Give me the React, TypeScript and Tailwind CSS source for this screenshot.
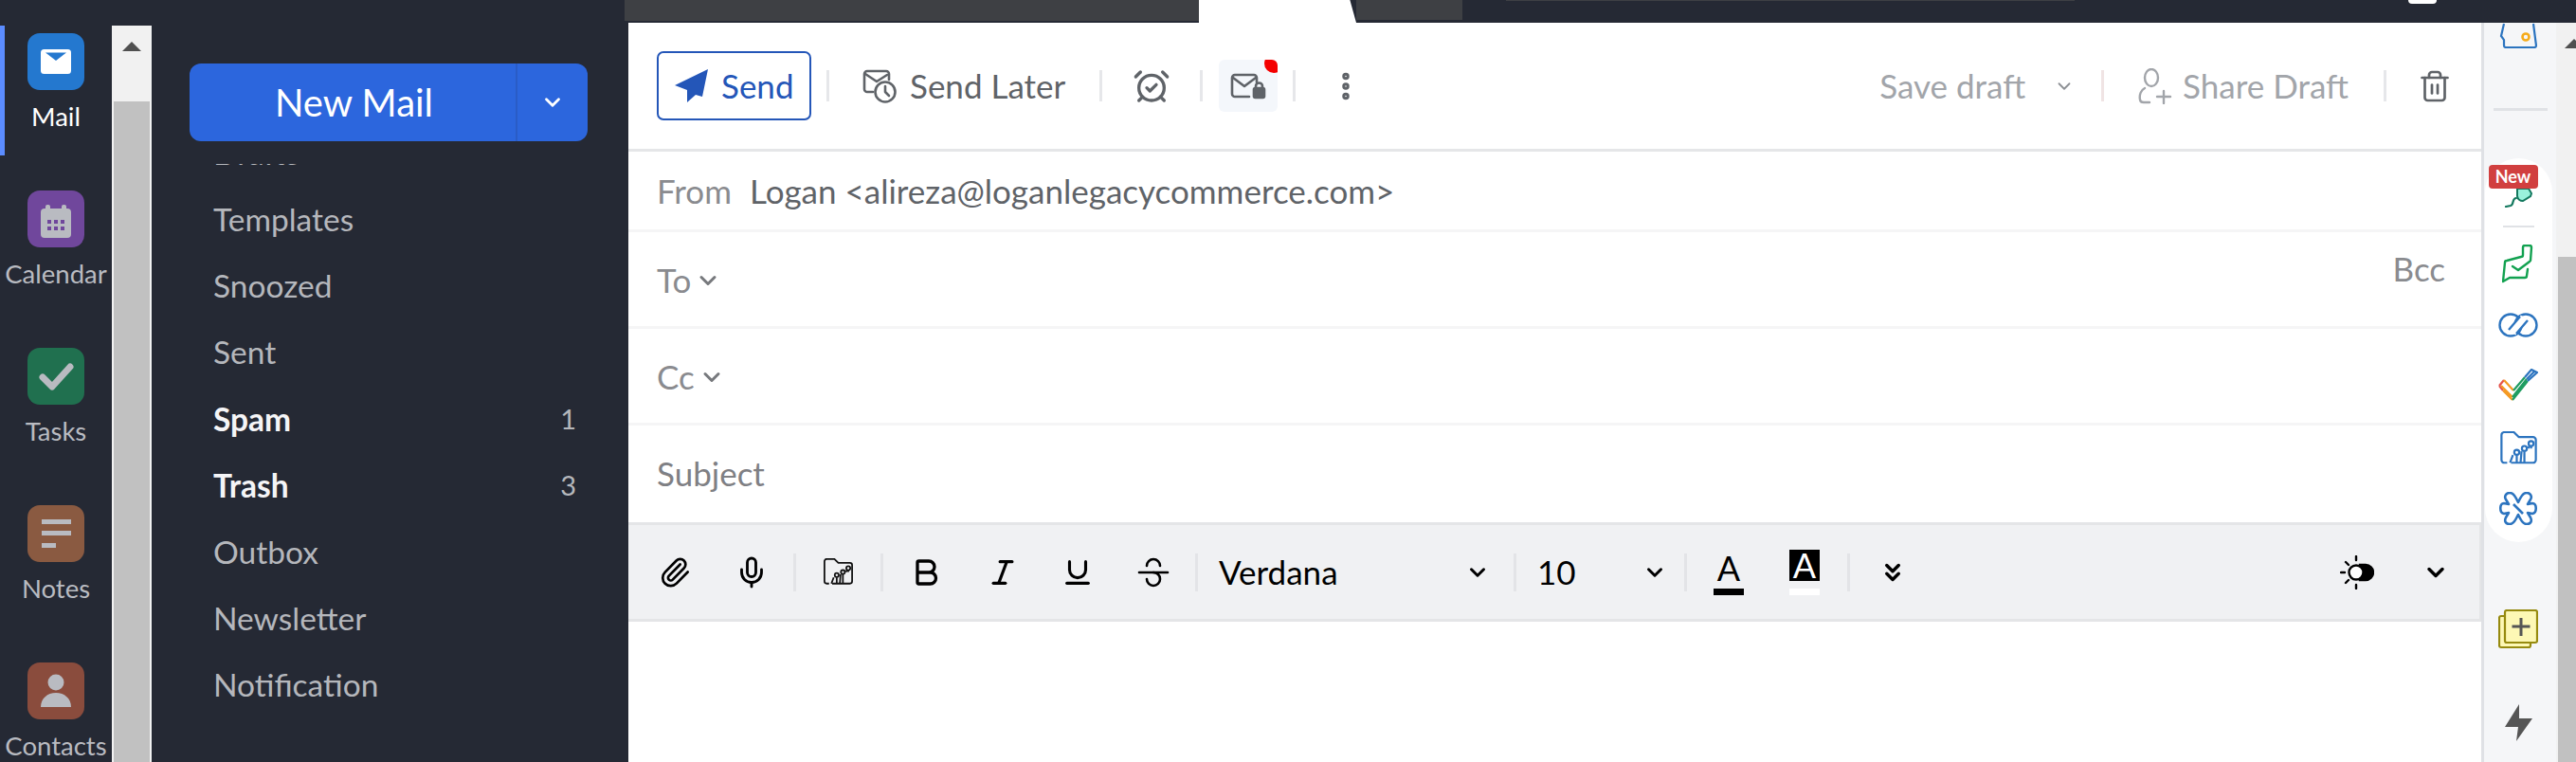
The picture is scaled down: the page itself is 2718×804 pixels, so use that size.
import {
  AlarmClockCheck,
  Bold,
  ChevronDown,
  ChevronsDown,
  EllipsisVertical,
  Italic,
  Mic,
  Paperclip,
  Trash2,
  Underline,
} from "lucide-react";

const Sep = ({ className = "" }: { className?: string }) => (
  <div className={`w-[3px] h-[33px] shrink-0 bg-[#e6e7ea] ${className}`}></div>
);

const ToolSep = ({ className = "" }: { className?: string }) => (
  <div className={`w-[3px] h-[40px] shrink-0 bg-[#e3e4e7] ${className}`}></div>
);

const FolderChart = ({ color, size }: { color: string; size: number }) => (
  <svg width={size} height={size * 0.86} viewBox="0 0 40 35" fill="none" stroke={color} strokeWidth="2.2" strokeLinejoin="round">
    <path d="M8 33H5a3 3 0 0 1-3-3V4a3 3 0 0 1 3-3h10l5 5h15a3 3 0 0 1 3 3v21a3 3 0 0 1-3 3H12" />
    <circle cx="18" cy="22" r="2.6" />
    <circle cx="26" cy="18" r="2.6" />
    <circle cx="33" cy="13" r="2.6" />
    <path d="M11 33l3-8M18 25v8M23 21l-1 12M26 21v12M31 16l-1 2M33 16v2" />
  </svg>
);

const apps = [
  {
    label: "Mail",
    bg: "bg-[#2478cf]",
    active: true,
    icon: (
      <svg width="60" height="60" viewBox="0 0 60 60">
        <rect x="14" y="17" width="32" height="26" rx="3.5" fill="#fff" />
        <path d="M19 20.500h22l-11 8.500z" fill="#2478cf" />
      </svg>
    ),
  },
  {
    label: "Calendar",
    bg: "bg-[#70479c]",
    icon: (
      <svg width="60" height="60" viewBox="0 0 60 60">
        <rect x="14" y="19" width="32" height="31" rx="4" fill="#b9bbc1" />
        <rect x="19" y="15" width="5" height="9" rx="2" fill="#b9bbc1" />
        <rect x="36" y="15" width="5" height="9" rx="2" fill="#b9bbc1" />
        <path d="M21 31h4v4h-4zM28 31h4v4h-4zM35 31h4v4h-4zM21 38h4v4h-4zM28 38h4v4h-4zM35 38h4v4h-4z" fill="#70479c" />
      </svg>
    ),
  },
  {
    label: "Tasks",
    bg: "bg-[#20704f]",
    icon: (
      <svg width="60" height="60" viewBox="0 0 60 60" fill="none">
        <path d="M16 31l10 10 19-21" stroke="#b9bbc1" strokeWidth="7" strokeLinecap="round" strokeLinejoin="round" />
      </svg>
    ),
  },
  {
    label: "Notes",
    bg: "bg-[#8a5a41]",
    icon: (
      <svg width="60" height="60" viewBox="0 0 60 60">
        <path d="M15 15h31v5H15zM15 27h31v5H15zM15 40h15v5H15z" fill="#b9bbc1" />
      </svg>
    ),
  },
  {
    label: "Contacts",
    bg: "bg-[#8a4c3d]",
    icon: (
      <svg width="60" height="60" viewBox="0 0 60 60">
        <circle cx="30" cy="21" r="8.5" fill="#b9bbc1" />
        <path d="M14 47c0-9 7-15 16-15s16 6 16 15z" fill="#b9bbc1" />
      </svg>
    ),
  },
];

const folders = [
  { name: "Drafts" },
  { name: "Templates" },
  { name: "Snoozed" },
  { name: "Sent" },
  { name: "Spam", count: 1 },
  { name: "Trash", count: 3 },
  { name: "Outbox" },
  { name: "Newsletter" },
  { name: "Notification" },
];

const App = () => {
  return (
    <div className="w-[2718px] h-[804px] overflow-hidden flex flex-col bg-[#252934] font-[Lato,sans-serif] whitespace-nowrap">
      {/* browser tabs peeking in at the top */}
      <div className="h-[24px] shrink-0 flex items-start">
        <div className="w-[659px] shrink-0"></div>
        <div className="w-[606px] h-[22px] shrink-0 bg-[#3e4044]"></div>
        <div className="w-[166px] h-[24px] shrink-0 bg-white [clip-path:polygon(0_0,96%_0,100%_100%,0_100%)]"></div>
        <div className="w-[112px] h-[21px] shrink-0 bg-[#3e4044]"></div>
        <div className="w-[46px] shrink-0"></div>
        <div className="w-[600px] h-[1px] shrink-0 bg-[#3e4044]"></div>
        <div className="w-[352px] shrink-0"></div>
        <div className="w-[30px] h-[4px] shrink-0 bg-white rounded-b-[14px]"></div>
      </div>

      <div className="flex flex-1 min-h-0">
        {/* app switcher */}
        <div className="w-[118px] shrink-0 pt-[3px] flex flex-col gap-[29px] overflow-hidden">
          {apps.map((app) => (
            <div
              key={app.label}
              className={`h-[137px] shrink-0 pt-[8px] flex flex-col items-center ${
                app.active ? "border-l-[5px] border-[#5b8cff] pr-[5px]" : ""
              }`}>
              <div className={`w-[60px] h-[60px] shrink-0 rounded-[13px] ${app.bg}`}>{app.icon}</div>
              <span
                className={`mt-[10px] text-[27.500px] leading-[36px] ${
                  app.active ? "text-white" : "text-[#b9bbc1]"
                }`}>
                {app.label}
              </span>
            </div>
          ))}
        </div>

        {/* app switcher scrollbar */}
        <div className="w-[42px] shrink-0 mt-[3px] bg-[#f1f1f1] flex flex-col">
          <div className="h-[80px] shrink-0 pt-[17px] flex justify-center">
            <div className="w-0 h-0 border-x-[10px] border-x-transparent border-b-[10px] border-b-[#505050]"></div>
          </div>
          <div className="flex-1 mx-[2px] bg-[#c1c1c1]"></div>
        </div>

        {/* folders */}
        <div className="w-[503px] shrink-0 flex flex-col">
          <div className="ml-[40px] mt-[43px] w-[420px] h-[82px] shrink-0 flex rounded-[12px] bg-[#2c66dd] text-white">
            <div className="w-[346px] pl-[3px] flex items-center justify-center text-[40px] border-r-[2px] border-[#2a5cc6]">
              New Mail
            </div>
            <div className="flex-1 flex items-center justify-center">
              <ChevronDown size={26} strokeWidth={2.6} />
            </div>
          </div>
          <div className="mt-[24px] flex-1 min-h-0 overflow-hidden pl-[65px] pr-[55px]">
            <div className="-mt-[47px]">
              {folders.map((f) => (
                <div key={f.name} className="h-[70.15px] flex items-center justify-between text-[33.500px]">
                  <span className={f.count ? "font-bold text-[#f5f5f7]" : "text-[#b5b7bc]"}>{f.name}</span>
                  {f.count && <span className="text-[29px] text-[#b5b7bc]">{f.count}</span>}
                </div>
              ))}
            </div>
          </div>
        </div>

        {/* compose */}
        <div className="w-[1955px] shrink-0 bg-white flex flex-col text-[#5f6368]">
          <div className="h-[136px] shrink-0 flex items-center pl-[30px] pr-[31px] border-b-[3px] border-[#e5e6e8] text-[35px]">
            <div className="w-[163px] h-[73px] shrink-0 rounded-[7px] border-[2px] border-[#2456b8] flex items-center pl-[17px] text-[#2456b8]">
              <svg className="shrink-0" width="36" height="36" viewBox="0 0 36 36">
                <path d="M35 0L0 17l13 5v13l9-8 7 2z" fill="#2456b8" />
              </svg>
              <span className="ml-[13px]">Send</span>
            </div>
            <Sep className="ml-[16px]" />
            <svg className="ml-[35px] shrink-0" width="36" height="36" viewBox="0 0 36 36" fill="none" stroke="#5f6368" strokeWidth="2.6" strokeLinecap="round" strokeLinejoin="round">
              <path d="M11 24H5a3 3 0 0 1-3-3V5a3 3 0 0 1 3-3h20a3 3 0 0 1 3 3v6" />
              <path d="M3 5l12 8 11-7" />
              <circle cx="24" cy="24" r="10.5" />
              <path d="M24 18v6l4 4" />
            </svg>
            <span className="ml-[14px] w-[165px] shrink-0">Send Later</span>
            <Sep className="ml-[35px]" />
            <AlarmClockCheck className="ml-[32px] shrink-0" size={40} strokeWidth={2} />
            <Sep className="ml-[31px]" />
            <div className="relative ml-[17px] w-[62px] h-[55px] shrink-0 rounded-[6px] bg-[#f4f7fb] flex items-center justify-center overflow-hidden">
              <svg width="38" height="28" viewBox="0 0 38 28" fill="none" stroke="#5f6368" strokeWidth="2.6" strokeLinecap="round" strokeLinejoin="round">
                <path d="M20 25H5a3 3 0 0 1-3-3V5a3 3 0 0 1 3-3h20a3 3 0 0 1 3 3v5" />
                <path d="M3 5l12 9 12-9" />
                <rect x="25" y="16" width="11" height="10" rx="1.5" fill="#5f6368" />
                <path d="M27 16v-2a3.5 3.5 0 0 1 7 0v2" />
              </svg>
              <div className="absolute -top-[6px] -right-[6px] w-[20px] h-[20px] rounded-full bg-[#f40000]"></div>
            </div>
            <Sep className="ml-[16px]" />
            <EllipsisVertical className="ml-[35px] shrink-0" size={36} strokeWidth={3} />

            <div className="ml-auto flex items-center text-[#a2a5aa]">
              <span>Save draft</span>
              <ChevronDown className="ml-[30px] text-[#8d9095]" size={22} strokeWidth={2} />
              <Sep className="ml-[28px] bg-[#f0e4e4]" />
              <svg className="ml-[36px]" width="36" height="38" viewBox="0 0 36 38" fill="none" stroke="#a2a5aa" strokeWidth="2.4" strokeLinecap="round">
                <ellipse cx="14" cy="10" rx="7" ry="9" />
                <path d="M7 21c-4 2-6 7-5 12 0 2 2 3 4 3h6" />
                <path d="M27 24v13M20 30h14" />
              </svg>
              <span className="ml-[11px]">Share Draft</span>
              <Sep className="ml-[37px]" />
              <Trash2 className="ml-[33px] text-[#5f6368]" size={36} strokeWidth={1.8} />
            </div>
          </div>

          <div className="h-[85px] shrink-0 flex items-center pl-[30px] border-b-[3px] border-[#f5f5f6] text-[35px]">
            <span className="text-[#8a8b8f]">From</span>
            <span className="ml-[19px]">Logan &lt;alireza@loganlegacycommerce.com&gt;</span>
          </div>
          <div className="h-[102px] shrink-0 flex items-center pt-[2px] pl-[30px] pr-[38px] border-b-[3px] border-[#f5f5f6] text-[35px] text-[#8a8b8f]">
            <span>To</span>
            <ChevronDown className="ml-[4px] text-[#77797d]" size={28} strokeWidth={2.6} />
            <span className="ml-auto -mt-[24px]">Bcc</span>
          </div>
          <div className="h-[102px] shrink-0 flex items-center pt-[2px] pl-[30px] border-b-[3px] border-[#f5f5f6] text-[35px] text-[#8a8b8f]">
            <span>Cc</span>
            <ChevronDown className="ml-[4px] text-[#77797d]" size={28} strokeWidth={2.6} />
          </div>
          <div className="h-[102px] shrink-0 flex items-center pb-[2px] pl-[30px] text-[35px] text-[#7f8084]">Subject</div>

          {/* formatting bar */}
          <div className="h-[105px] shrink-0 flex items-center pl-[32px] pr-[32px] bg-[#f0f1f3] border-y-[3px] border-[#e4e5e7] border-r-[2px] text-black">
            <Paperclip size={34} strokeWidth={1.9} className="shrink-0" />
            <Mic size={36} strokeWidth={1.9} className="ml-[46px] shrink-0" />
            <ToolSep className="ml-[26px]" />
            <div className="ml-[28px]">
              <FolderChart color="#111" size={33} />
            </div>
            <ToolSep className="ml-[28px]" />
            <Bold size={36} strokeWidth={2.2} className="ml-[27px] shrink-0" />
            <Italic size={34} strokeWidth={2.2} className="ml-[46px] shrink-0" />
            <Underline size={34} strokeWidth={2.2} className="ml-[45px] shrink-0" />
            <svg className="ml-[45px] shrink-0" width="36" height="36" viewBox="0 0 36 36" fill="none" stroke="#000" strokeWidth="2.6" strokeLinecap="round">
              <path d="M3 18h30" />
              <path d="M11 11a7 7 0 0 1 14 0" />
              <path d="M18 18c4 0 7 3 7 7a7 7 0 0 1-14 0" />
            </svg>
            <ToolSep className="ml-[26px]" />
            <span className="ml-[22px] w-[260px] shrink-0 text-[35px]">Verdana</span>
            <ChevronDown size={26} strokeWidth={2.8} className="shrink-0" />
            <ToolSep className="ml-[25px]" />
            <span className="ml-[22px] w-[111px] shrink-0 text-[35px]">10</span>
            <ChevronDown size={26} strokeWidth={2.8} className="shrink-0" />
            <ToolSep className="ml-[18px]" />
            <div className="ml-[27px] w-[34px] shrink-0 flex flex-col items-center">
              <span className="text-[36px] leading-[38px]">A</span>
              <div className="mt-[3px] w-[32px] h-[7px] bg-black"></div>
            </div>
            <div className="ml-[47px] w-[32px] shrink-0 flex flex-col items-center">
              <span className="w-[32px] h-[33px] bg-black text-white text-[36px] leading-[33px] text-center">A</span>
              <div className="mt-[8px] w-[32px] h-[7px] bg-white"></div>
            </div>
            <ToolSep className="ml-[29px]" />
            <ChevronsDown size={30} strokeWidth={2.8} className="ml-[30px] shrink-0" />
            <div className="ml-auto flex items-center">
              <svg width="36" height="36" viewBox="0 0 36 36" fill="none" stroke="#000" strokeWidth="2.4" strokeLinecap="round">
                <path d="M17 1v4M17 31v4M1 18h4M6 7l3 3M6 29l3-3" />
                <path d="M21 10h6a8 8 0 0 1 0 16h-6z" fill="#000" />
                <circle cx="17" cy="18" r="7.5" fill="#fff" />
              </svg>
              <ChevronDown size={28} strokeWidth={3} className="ml-[51px]" />
            </div>
          </div>
          <div className="flex-1"></div>
        </div>

        {/* integrations rail */}
        <div className="w-[79px] shrink-0 border-l-[3px] border-[#dfe1e5] bg-[#f5f6f8] flex flex-col items-center overflow-hidden">
          <svg className="shrink-0 mr-[4px]" width="42" height="27" viewBox="0 0 42 27" fill="none" strokeWidth="2.2">
            <path d="M6 1L3 14l3 4v6a2 2 0 0 0 2 2h30a2 2 0 0 0 2-2L37 1" stroke="#2c74bf" />
            <circle cx="29" cy="15" r="3.5" stroke="#f5ab1b" strokeWidth="2.6" />
          </svg>
          <div className="mt-[63px] w-[57px] h-[3px] shrink-0 bg-[#e0e2e6]"></div>
          <div className="mt-[50px] mr-[4px] w-[71px] h-[405px] shrink-0 rounded-[36px] bg-white flex flex-col items-center">
            <div className="relative mt-[26px] h-[26px] w-full">
              <div className="absolute left-[4px] top-[-19px] h-[25px] w-[52px] rounded-[4px] bg-[#d13f3f] text-white text-[18px] font-bold leading-[25px] text-center">
                New
              </div>
              <svg className="absolute left-[18px] top-[6px]" width="34" height="20" viewBox="0 0 34 20" fill="none">
                <path d="M16 0v8a6 6 0 0 0 6 5l8-5 1-3-3-5z" fill="#9af2dc" stroke="#14795f" strokeWidth="2" />
                <path d="M15 10c-5 0-2 7-6 8l-5 1" stroke="#14795f" strokeWidth="2.2" strokeLinecap="round" />
              </svg>
            </div>
            <div className="mt-[19px] w-[33px] h-[2px] bg-[#e0e2e6]"></div>
            <svg className="mt-[18px]" width="34" height="41" viewBox="0 0 34 41" fill="none" stroke="#12a150" strokeWidth="2.4" strokeLinejoin="round" strokeLinecap="round">
              <path d="M27 26l-1 7a2 2 0 0 1-2 2H8l-7 4L3 19a2 2 0 0 1 2-2l15-4a2 2 0 0 0 2-2V3a2 2 0 0 1 2-2h5a2 2 0 0 1 2 2l-1 14" />
              <path d="M11 23l6 4 12-9" />
            </svg>
            <svg className="mt-[30px]" width="42" height="28" viewBox="0 0 42 28" fill="none" strokeWidth="2.4">
              <circle cx="13" cy="14" r="11.500" stroke="#2c74bf" />
              <circle cx="29" cy="14" r="11.500" stroke="#2c74bf" />
              <path d="M15 22L27 6" stroke="#fff" strokeWidth="8" />
              <path d="M11 19L23 5M19 23L31 9" stroke="#2c74bf" />
            </svg>
            <svg className="mt-[32px]" width="42" height="34" viewBox="0 0 42 34" fill="none" strokeWidth="2.200" strokeLinejoin="round">
              <path d="M1 18L6 12M1 18l4 5" stroke="#e5534b" />
              <path d="M5 23l10 10M6 12l10 11M3 18l12 12" stroke="#f59a23" />
              <path d="M15 33L31 13M16 23L28 9M15 30L30 11" stroke="#1f9d61" />
              <path d="M31 13l10-9-6-3-7 8M30 11l8-8" stroke="#2c74bf" />
            </svg>
            <div className="mt-[32px]">
              <FolderChart color="#2c74bf" size={41} />
            </div>
            <svg className="mt-[29px]" width="42" height="35" viewBox="0 0 42 35" fill="none" stroke="#2c74bf" strokeWidth="2.6" strokeLinejoin="round">
              <path d="M21 11C18 5 16 1 12 1 8 1 6 5 8 8l3 5-5-1c-5 0-5 10 0 11l5-1-3 5c-2 4 0 7 4 7s6-4 9-10c3 6 5 10 9 10s6-3 4-7l-3-5 5 1c5-1 5-11 0-11l-5 1 3-5c2-3 0-7-4-7s-6 4-9 10z" />
              <path d="M16 13l10 10" />
            </svg>
          </div>
          <svg className="mt-[71px] mr-[4px] shrink-0" width="42" height="42" viewBox="0 0 42 42" fill="none" stroke="#968a0f" strokeWidth="2.2" strokeLinejoin="round">
            <rect x="1" y="7" width="33" height="33" rx="2" fill="#fdf8b5" />
            <rect x="7" y="1" width="34" height="34" rx="2" fill="#fdf8b5" />
            <path d="M24 9v19M14.500 18h19" stroke="#555" strokeWidth="3" />
          </svg>
          <svg className="mt-[58px] mr-[4px] shrink-0" width="30" height="40" viewBox="0 0 30 40">
            <path d="M16 0L1 24h14l-2 15 17-24H16z" fill="#555" />
          </svg>
        </div>

        {/* page scrollbar */}
        <div className="flex-1 bg-[#f1f1f1] flex flex-col overflow-hidden">
          <div className="h-[247px] shrink-0 pt-[17px] pl-[9px]">
            <div className="w-0 h-0 border-x-[10px] border-x-transparent border-b-[10px] border-b-[#505050]"></div>
          </div>
          <div className="flex-1 ml-[2px] bg-[#c1c1c1]"></div>
        </div>
      </div>
    </div>
  );
};

export default App;
